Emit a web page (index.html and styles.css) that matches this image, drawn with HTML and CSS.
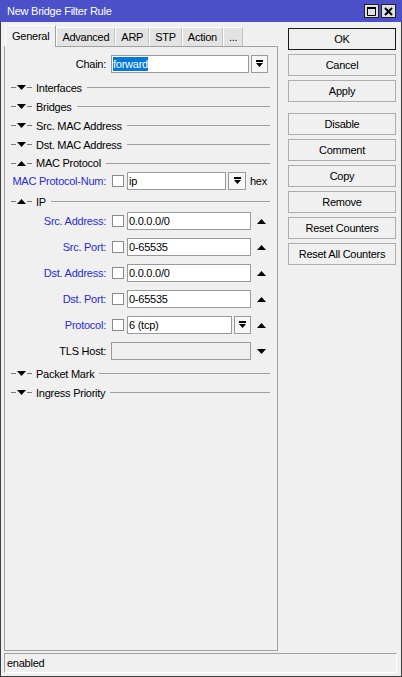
FILE: index.html
```html
<!DOCTYPE html>
<html lang="en">
<head>
    <meta charset="UTF-8">
    <title>New Bridge Filter Rule</title>
    <link rel="stylesheet" href="styles.css">
</head>
<body>

<div class="window">
    <div class="titlebar">
        <span class="title">New Bridge Filter Rule</span>
        <span class="tbtn">
            <svg width="9" height="9" viewBox="0 0 9 9"><path d="M0.5 0.5h8v8h-8z M0.5 1.5h8" fill="none" stroke="#000" stroke-width="1"/><rect x="0" y="0" width="9" height="2"/></svg>
        </span>
        <span class="tbtn">
            <svg width="9" height="9" viewBox="0 0 9 9"><path d="M1 1L8 8M8 1L1 8" stroke="#000" stroke-width="2"/></svg>
        </span>
    </div>

    <div class="main">
        <div class="left">
            <div class="tabs">
                <span class="tab active">General</span>
                <span class="tab">Advanced</span>
                <span class="tab">ARP</span>
                <span class="tab">STP</span>
                <span class="tab">Action</span>
                <span class="tab">...</span>
            </div>

            <div class="panel">
                <div class="row row-chain">
                    <span class="lbl">Chain:</span>
                    <span class="input chain-input"><span class="selected">forward</span></span>
                    <span class="dd"><svg width="9" height="8" viewBox="0 0 9 8"><rect x="1" y="0" width="7" height="2"/><path d="M1 3h7L4.5 7z"/></svg></span>
                </div>

                <div class="section first">
                    <span class="dash"></span>
                    <svg class="tri" width="9" height="5" viewBox="0 0 9 5"><path d="M0 0h9L4.5 5z"/></svg>
                    <span class="dash"></span>
                    <span class="sec-title">Interfaces</span>
                    <span class="rule"></span>
                </div>
                <div class="section">
                    <span class="dash"></span>
                    <svg class="tri" width="9" height="5" viewBox="0 0 9 5"><path d="M0 0h9L4.5 5z"/></svg>
                    <span class="dash"></span>
                    <span class="sec-title">Bridges</span>
                    <span class="rule"></span>
                </div>
                <div class="section">
                    <span class="dash"></span>
                    <svg class="tri" width="9" height="5" viewBox="0 0 9 5"><path d="M0 0h9L4.5 5z"/></svg>
                    <span class="dash"></span>
                    <span class="sec-title">Src. MAC Address</span>
                    <span class="rule"></span>
                </div>
                <div class="section">
                    <span class="dash"></span>
                    <svg class="tri" width="9" height="5" viewBox="0 0 9 5"><path d="M0 0h9L4.5 5z"/></svg>
                    <span class="dash"></span>
                    <span class="sec-title">Dst. MAC Address</span>
                    <span class="rule"></span>
                </div>
                <div class="section short">
                    <span class="dash"></span>
                    <svg class="tri" width="9" height="5" viewBox="0 0 9 5"><path d="M0 5h9L4.5 0z"/></svg>
                    <span class="dash"></span>
                    <span class="sec-title">MAC Protocol</span>
                    <span class="rule"></span>
                </div>

                <div class="row">
                    <span class="lbl blue">MAC Protocol-Num:</span>
                    <span class="cb"></span>
                    <span class="input mac-input">ip</span>
                    <span class="dd wide"><svg width="9" height="8" viewBox="0 0 9 8"><rect x="1" y="0" width="7" height="2"/><path d="M1 3h7L4.5 7z"/></svg></span>
                    <span class="hex">hex</span>
                </div>

                <div class="section ip">
                    <span class="dash"></span>
                    <svg class="tri" width="9" height="5" viewBox="0 0 9 5"><path d="M0 5h9L4.5 0z"/></svg>
                    <span class="dash"></span>
                    <span class="sec-title">IP</span>
                    <span class="rule"></span>
                </div>

                <div class="fields">
                    <div class="row">
                        <span class="lbl blue">Src. Address:</span>
                        <span class="cb"></span>
                        <span class="input field-input">0.0.0.0/0</span>
                        <svg class="arrow" width="9" height="5" viewBox="0 0 9 5"><path d="M0 5h9L4.5 0z"/></svg>
                    </div>
                    <div class="row">
                        <span class="lbl blue">Src. Port:</span>
                        <span class="cb"></span>
                        <span class="input field-input">0-65535</span>
                        <svg class="arrow" width="9" height="5" viewBox="0 0 9 5"><path d="M0 5h9L4.5 0z"/></svg>
                    </div>
                    <div class="row">
                        <span class="lbl blue">Dst. Address:</span>
                        <span class="cb"></span>
                        <span class="input field-input">0.0.0.0/0</span>
                        <svg class="arrow" width="9" height="5" viewBox="0 0 9 5"><path d="M0 5h9L4.5 0z"/></svg>
                    </div>
                    <div class="row">
                        <span class="lbl blue">Dst. Port:</span>
                        <span class="cb"></span>
                        <span class="input field-input">0-65535</span>
                        <svg class="arrow" width="9" height="5" viewBox="0 0 9 5"><path d="M0 5h9L4.5 0z"/></svg>
                    </div>
                    <div class="row">
                        <span class="lbl blue">Protocol:</span>
                        <span class="cb"></span>
                        <span class="input proto-input">6 (tcp)</span>
                        <span class="dd"><svg width="9" height="8" viewBox="0 0 9 8"><rect x="1" y="0" width="7" height="2"/><path d="M1 3h7L4.5 7z"/></svg></span>
                        <svg class="arrow" width="9" height="5" viewBox="0 0 9 5"><path d="M0 5h9L4.5 0z"/></svg>
                    </div>
                    <div class="row">
                        <span class="lbl">TLS Host:</span>
                        <span class="input tls-input"></span>
                        <svg class="arrow" width="9" height="5" viewBox="0 0 9 5"><path d="M0 0h9L4.5 5z"/></svg>
                    </div>
                </div>

                <div class="section packet">
                    <span class="dash"></span>
                    <svg class="tri" width="9" height="5" viewBox="0 0 9 5"><path d="M0 0h9L4.5 5z"/></svg>
                    <span class="dash"></span>
                    <span class="sec-title">Packet Mark</span>
                    <span class="rule"></span>
                </div>
                <div class="section">
                    <span class="dash"></span>
                    <svg class="tri" width="9" height="5" viewBox="0 0 9 5"><path d="M0 0h9L4.5 5z"/></svg>
                    <span class="dash"></span>
                    <span class="sec-title">Ingress Priority</span>
                    <span class="rule"></span>
                </div>
            </div>
        </div>

        <div class="buttons">
            <span class="btn ok">OK</span>
            <span class="btn">Cancel</span>
            <span class="btn">Apply</span>
            <span class="btn spaced">Disable</span>
            <span class="btn">Comment</span>
            <span class="btn">Copy</span>
            <span class="btn">Remove</span>
            <span class="btn">Reset Counters</span>
            <span class="btn">Reset All Counters</span>
        </div>
    </div>

    <div class="statusbar">enabled</div>
</div>

</body>
</html>
```

FILE: styles.css
```css
* {
    box-sizing: border-box;
}
body {
    margin: 0;
    font-family: "Liberation Sans", Arial, sans-serif;
    font-size: 11px;
    letter-spacing: -0.25px;
    color: #000;
    background: #f0f0f0;
}
.window {
    width: 402px;
    height: 677px;
    display: flex;
    flex-direction: column;
    background: #f0f0f0;
    border: 1px solid #3c3c3c;
    border-top: none;
}
.titlebar {
    height: 22px;
    margin: 0 -1px;
    padding: 0 6px 0 7px;
    display: flex;
    align-items: center;
    background: #4b50c8;
    color: #fff;
}
.title {
    flex-grow: 1;
}
.tbtn {
    width: 15px;
    height: 14px;
    margin-left: 2px;
    display: flex;
    align-items: center;
    justify-content: center;
    background: #e0e0e0;
    border: 1px solid #222;
}
.main {
    flex-grow: 1;
    display: flex;
    padding: 3px 0 0 3px;
    min-height: 0;
}
.left {
    width: 274px;
    display: flex;
    flex-direction: column;
}
.tabs {
    height: 21px;
    display: flex;
    align-items: flex-end;
    padding-left: 1px;
}
.tab {
    height: 19px;
    padding: 2px 5px 0;
    background: #e3e3e3;
    border-left: 1px solid #fff;
    border-top: 1px solid #fff;
    border-right: 1px solid #c4c4c4;
    line-height: 15px;
}
.tab.active {
    height: 22px;
    margin-bottom: -1px;
    padding: 3px 6px 0;
    background: #f0f0f0;
    border-right-color: #a0a0a0;
    position: relative;
    z-index: 1;
}
.panel {
    flex-grow: 1;
    border: 1px solid #a0a0a0;
    padding-top: 8px;
}
.row {
    display: flex;
    align-items: center;
    height: 18px;
}
.lbl {
    width: 101px;
    text-align: right;
    white-space: nowrap;
}
.lbl.blue {
    color: #2b2bd0;
}
.input {
    height: 18px;
    background: #fff;
    border: 1px solid #9a9a9a;
    padding-left: 1px;
    line-height: 16px;
    white-space: nowrap;
}
.chain-input {
    width: 138px;
    margin-left: 5px;
}
.selected {
    background: #0078d7;
    color: #fff;
    padding: 1px 0;
}
.dd {
    width: 17px;
    height: 18px;
    margin-left: 2px;
    display: flex;
    align-items: center;
    justify-content: center;
    background: #f7f7f7;
    border: 1px solid #9a9a9a;
}
.dd.wide {
    width: 18px;
}
.cb {
    width: 12px;
    height: 12px;
    margin-left: 6px;
    background: #fff;
    border: 1px solid #8a8a8a;
}
.mac-input {
    width: 99px;
    margin-left: 3px;
}
.hex {
    margin-left: 4px;
}
.field-input {
    width: 124px;
    margin-left: 3px;
}
.proto-input {
    width: 105px;
    margin-left: 3px;
}
.tls-input {
    width: 140px;
    margin-left: 5px;
    background: #f0f0f0;
}
.arrow {
    margin-left: 6px;
}
.fields {
    display: flex;
    flex-direction: column;
    gap: 8px;
    margin-top: 1px;
}
.section {
    display: flex;
    align-items: center;
    height: 19px;
    padding: 0 7px 0 6px;
}
.section.first {
    margin-top: 5px;
}
.section.short {
    height: 18px;
}
.section.ip {
    margin-top: 2px;
}
.section.packet {
    margin-top: 4px;
}
.dash {
    width: 5px;
    height: 1px;
    background: #7a7a7a;
}
.tri {
    margin: 0 1px;
}
.sec-title {
    margin-left: 4px;
    white-space: nowrap;
}
.rule {
    flex-grow: 1;
    height: 1px;
    margin-left: 5px;
    background: #a0a0a0;
}
.buttons {
    width: 108px;
    margin-left: 10px;
    padding-top: 3px;
    display: flex;
    flex-direction: column;
    gap: 4px;
}
.btn {
    height: 22px;
    line-height: 20px;
    text-align: center;
    background: #f0f0f0;
    border: 1px solid #adadad;
}
.btn.ok {
    border-color: #1a1a1a;
}
.btn.spaced {
    margin-top: 7px;
}
.statusbar {
    height: 20px;
    margin: 2px 4px 3px 3px;
    padding-left: 2px;
    line-height: 18px;
    border-top: 1px solid #a0a0a0;
    border-left: 1px solid #a0a0a0;
    border-bottom: 1px solid #fff;
    border-right: 1px solid #fff;
}
```
